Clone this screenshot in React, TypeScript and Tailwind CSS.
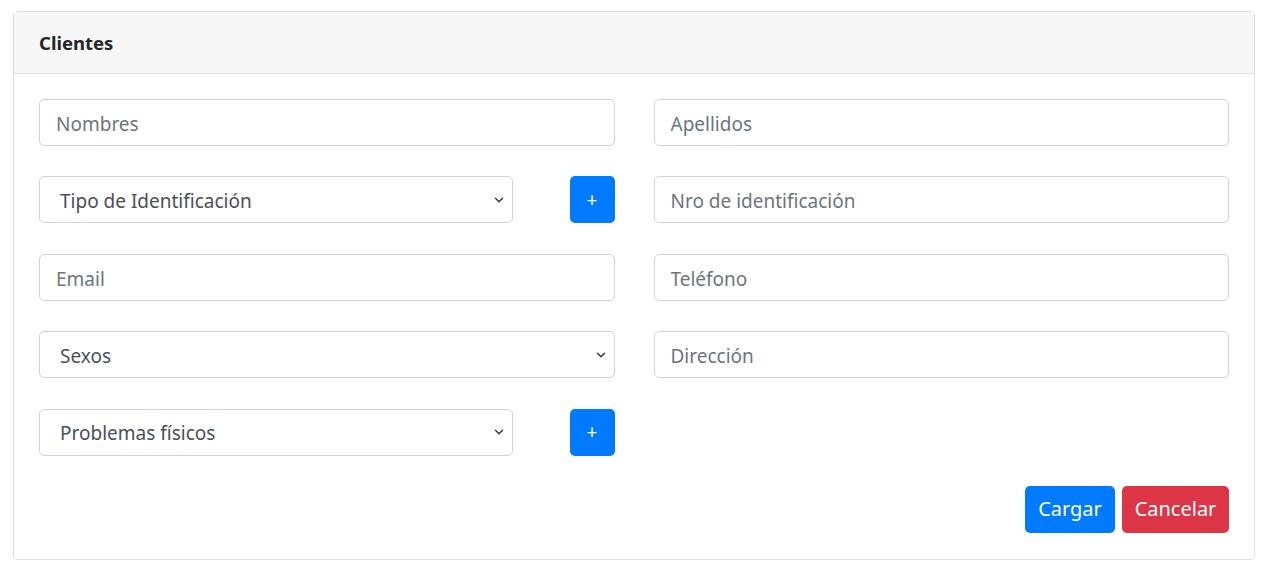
import { ChevronDown } from "lucide-react";

const font = { fontFamily: '"Segoe UI", "Noto Sans", "Open Sans", sans-serif' };

function TextField({ placeholder }: { placeholder: string }) {
    return (
        <input
            type="text"
            placeholder={placeholder}
            className="w-full h-[47px] rounded-[5px] border border-[#ced4da] bg-white px-4 pt-[3px] text-[19px] text-[#495057] placeholder:text-[#6c757d] outline-none"
        />
    );
}

function SelectField({ label }: { label: string }) {
    return (
        <div className="relative w-full">
            <select className="w-full h-[47px] appearance-none rounded-[5px] border border-[#ced4da] bg-white pl-[20px] pr-10 pt-[3px] text-[19px] text-[#495057] outline-none">
                <option>{label}</option>
            </select>
            <ChevronDown
                size={14}
                strokeWidth={2.5}
                className="pointer-events-none absolute right-[7px] top-1/2 -translate-y-1/2 text-[#343a40]"
            />
        </div>
    );
}

function PlusButton() {
    return (
        <button className="h-[47px] w-[45px] shrink-0 rounded-[5px] bg-[#007bff] text-[19px] text-white">
            +
        </button>
    );
}

export default function App() {
    return (
        <div className="bg-white min-h-screen pt-[11px] pl-[13px] pr-[14px]" style={font}>
            <div className="rounded-[5px] border border-[#dfdfdf]">
                <div className="h-[62px] flex items-center px-[25px] bg-[#f7f7f7] border-b border-[#dfdfdf]">
                    <h5 className="text-[18.5px] font-bold text-[#212529]">Clientes</h5>
                </div>

                <div className="pt-[25px] px-[25px] pb-[26px]">
                    <div className="grid grid-cols-2 gap-x-[39px] gap-y-[30.4px]">
                        <TextField placeholder="Nombres" />
                        <TextField placeholder="Apellidos" />

                        <div className="flex items-center justify-between">
                            <div className="w-[474px]">
                                <SelectField label="Tipo de Identificación" />
                            </div>
                            <PlusButton />
                        </div>
                        <TextField placeholder="Nro de identificación" />

                        <TextField placeholder="Email" />
                        <TextField placeholder="Teléfono" />

                        <SelectField label="Sexos" />
                        <TextField placeholder="Dirección" />

                        <div className="flex items-center justify-between">
                            <div className="w-[474px]">
                                <SelectField label="Problemas físicos" />
                            </div>
                            <PlusButton />
                        </div>
                        <div />

                        <div />
                        <div className="flex justify-end gap-[7px]">
                            <button className="h-[47px] w-[90px] rounded-[5px] bg-[#007bff] text-[20px] text-white">
                                Cargar
                            </button>
                            <button className="h-[47px] w-[107px] rounded-[5px] bg-[#dc3545] text-[20px] text-white">
                                Cancelar
                            </button>
                        </div>
                    </div>
                </div>
            </div>
        </div>
    );
}
